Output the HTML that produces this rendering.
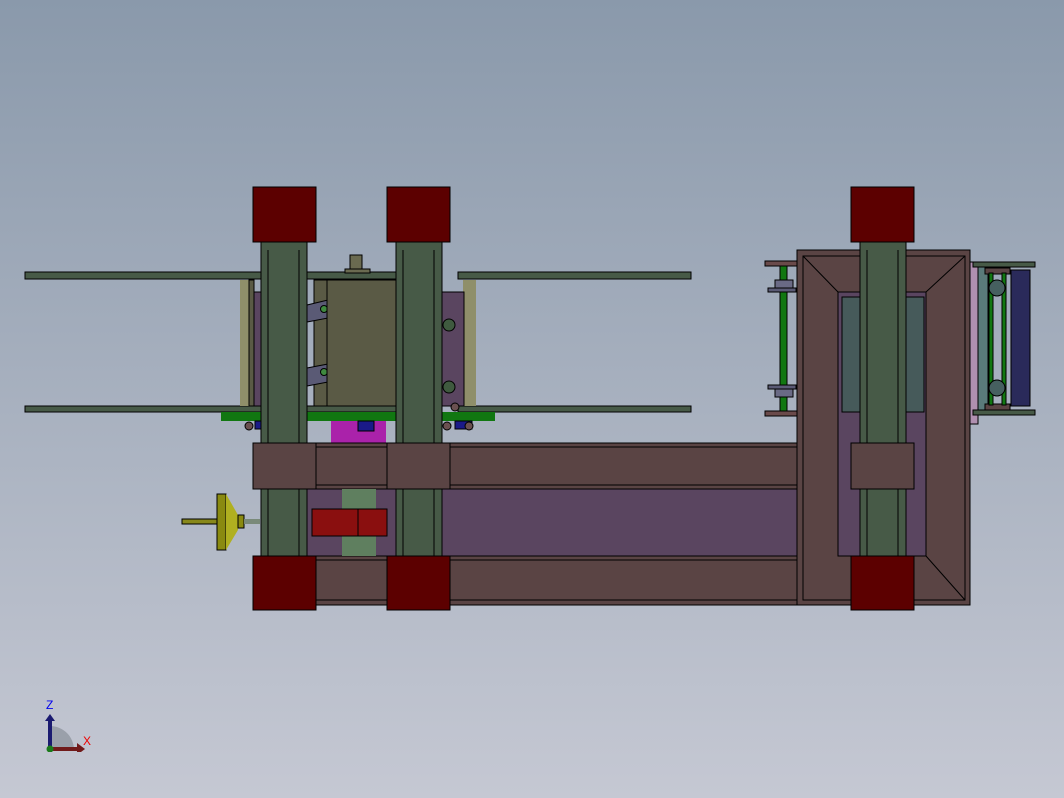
<!DOCTYPE html><html><head><style>html,body{margin:0;padding:0}body{width:1064px;height:798px;overflow:hidden;background:linear-gradient(#8a99ab,#c5c8d3)}</style></head><body>
<svg width="1064" height="798" viewBox="0 0 1064 798" xmlns="http://www.w3.org/2000/svg" style="position:absolute;left:0;top:0" stroke="#000" stroke-width="1">
<!-- rails -->
<g fill="#475a47">
<rect x="25" y="272" width="237" height="7"/><rect x="307" y="272" width="90" height="7"/><rect x="458" y="272" width="233" height="7"/>
<rect x="25" y="406" width="237" height="6"/><rect x="307" y="406" width="90" height="6"/><rect x="458" y="406" width="233" height="6"/>
</g>
<rect x="240" y="280" width="9" height="126" fill="#8f8f6a" stroke="none"/><rect x="249" y="280" width="5" height="126" fill="#5a5a45"/>
<rect x="463" y="280" width="13" height="126" fill="#8f8f6a" stroke="none"/>
<rect x="254" y="292" width="8" height="114" fill="#5a4560"/>
<rect x="442" y="292" width="22" height="114" fill="#5a4560"/>
<circle cx="449" cy="325" r="6" fill="#3f5a3f"/><circle cx="449" cy="387" r="6" fill="#3f5a3f"/>
<rect x="314" y="280" width="14" height="126" fill="#5a5a45"/>
<path d="M307 305 L328 300 L328 318 L307 322Z M307 368 L328 364 L328 382 L307 386Z" fill="#5a5a75"/>
<circle cx="324" cy="309" r="3.5" fill="#3f8a3f"/><circle cx="324" cy="372" r="3.5" fill="#3f8a3f"/>
<rect x="327" y="280" width="70" height="126" fill="#5a5a45"/>
<rect x="350" y="255" width="12" height="15" fill="#6a6a50"/><rect x="345" y="269" width="25" height="4" fill="#6a6a50"/>
<rect x="221" y="412" width="274" height="9" fill="#117711" stroke="none"/>
<rect x="255" y="421" width="8" height="8" fill="#1a1a88"/><rect x="455" y="421" width="17" height="8" fill="#1a1a88"/>
<circle cx="249" cy="426" r="4" fill="#6a5050"/><circle cx="447" cy="426" r="4" fill="#6a5050"/><circle cx="469" cy="426" r="4" fill="#6a5050"/><circle cx="455" cy="407" r="4" fill="#6a5050"/>
<rect x="331" y="421" width="55" height="22" fill="#aa22aa" stroke="none"/><rect x="358" y="421" width="16" height="10" fill="#1a1a88"/>
<!-- frame -->
<rect x="305" y="489" width="495" height="67" fill="#5a4560"/>
<rect x="253" y="443" width="547" height="46" fill="#5a4444"/>
<line x1="316" y1="447" x2="800" y2="447"/><line x1="316" y1="485" x2="800" y2="485"/>
<rect x="253" y="556" width="717" height="49" fill="#5a4444"/>
<line x1="316" y1="560" x2="851" y2="560"/><line x1="316" y1="600" x2="851" y2="600"/>
<rect x="797" y="250" width="173" height="355" fill="#5a4444"/>
<rect x="803" y="256" width="162" height="344" fill="none"/>
<rect x="838" y="292" width="88" height="264" fill="#5a4560"/>
<rect x="842" y="297" width="82" height="115" fill="#465a5a"/>
<path d="M803 256 L838 292 M965 256 L926 292 M965 600 L926 556" fill="none"/>
<!-- shaft & coupler -->
<rect x="342" y="489" width="34" height="67" fill="#5f7f5f" stroke="none"/>
<rect x="312" y="509" width="75" height="27" fill="#8a0f0f"/><line x1="358" y1="509" x2="358" y2="536"/>
<!-- handwheel -->
<rect x="182" y="519" width="38" height="5" fill="#88881a"/>
<rect x="217" y="494" width="9" height="56" fill="#8a8a10"/>
<path d="M226 494 L238 515 L238 530 L226 550Z" fill="#b0b020" stroke="none"/>
<rect x="238" y="515" width="6" height="13" fill="#8a8a10"/><rect x="244" y="519" width="16" height="5" fill="#7a8a7a" stroke="none"/>
<!-- columns -->
<g fill="#475a47">
<rect x="261" y="240" width="46" height="316"/><rect x="396" y="240" width="46" height="316"/><rect x="860" y="240" width="46" height="316"/>
</g>
<g fill="none" stroke="#000"><path d="M268 250 V556 M299 250 V556 M403 250 V556 M434 250 V556 M867 250 V556 M898 250 V556"/></g>
<g fill="#5a4444"><rect x="253" y="443" width="63" height="46"/><rect x="387" y="443" width="63" height="46"/><rect x="851" y="443" width="63" height="46"/></g>
<g fill="#5c0000"><rect x="253" y="187" width="63" height="55"/><rect x="387" y="187" width="63" height="55"/><rect x="851" y="187" width="63" height="55"/>
<rect x="253" y="556" width="63" height="54"/><rect x="387" y="556" width="63" height="54"/><rect x="851" y="556" width="63" height="54"/></g>
<!-- left small rod -->
<rect x="765" y="261" width="32" height="5" fill="#6a4a4a"/><rect x="765" y="411" width="32" height="5" fill="#6a4a4a"/>
<rect x="780" y="266" width="7" height="145" fill="#117711"/>
<rect x="768" y="288" width="28" height="4" fill="#5a5a75"/><rect x="775" y="280" width="18" height="8" fill="#6a6a85"/>
<rect x="768" y="385" width="28" height="4" fill="#5a5a75"/><rect x="775" y="389" width="18" height="8" fill="#6a6a85"/>
<!-- right roller bracket -->
<rect x="970" y="262" width="8" height="162" fill="#b090b0"/>
<rect x="978" y="265" width="10" height="145" fill="#5a7a7a"/>
<rect x="973" y="262" width="62" height="5" fill="#475a47"/><rect x="973" y="410" width="62" height="5" fill="#475a47"/>
<rect x="985" y="268" width="25" height="6" fill="#5a4444"/><rect x="985" y="404" width="25" height="6" fill="#5a4444"/>
<rect x="989" y="273" width="4" height="132" fill="#117711"/><rect x="1002" y="273" width="4" height="132" fill="#117711"/>
<circle cx="997" cy="288" r="8" fill="#466060"/><circle cx="997" cy="388" r="8" fill="#466060"/>
<rect x="1011" y="270" width="19" height="136" fill="#2a2a5a"/>
</g>
</svg>
<div style="position:absolute;left:46px;top:698px;font:12px 'Liberation Sans',sans-serif;color:#0000ee">Z</div>
<div style="position:absolute;left:83px;top:734px;font:12px 'Liberation Sans',sans-serif;color:#ee0000">X</div>
<svg width="50" height="40" style="position:absolute;left:40px;top:712px">
<path d="M10 14 A24 24 0 0 1 34 38 L10 38Z" fill="#9aa0aa"/>
<rect x="8" y="6" width="4" height="32" fill="#1a1a70"/><path d="M5 9 L10 2 L15 9Z" fill="#1a1a70"/>
<rect x="10" y="35" width="28" height="4" fill="#701a1a"/><path d="M37 31 L45 37 L37 43Z" fill="#701a1a"/>
<circle cx="10" cy="37" r="3.5" fill="#1a7a1a"/></svg>
</body></html>
